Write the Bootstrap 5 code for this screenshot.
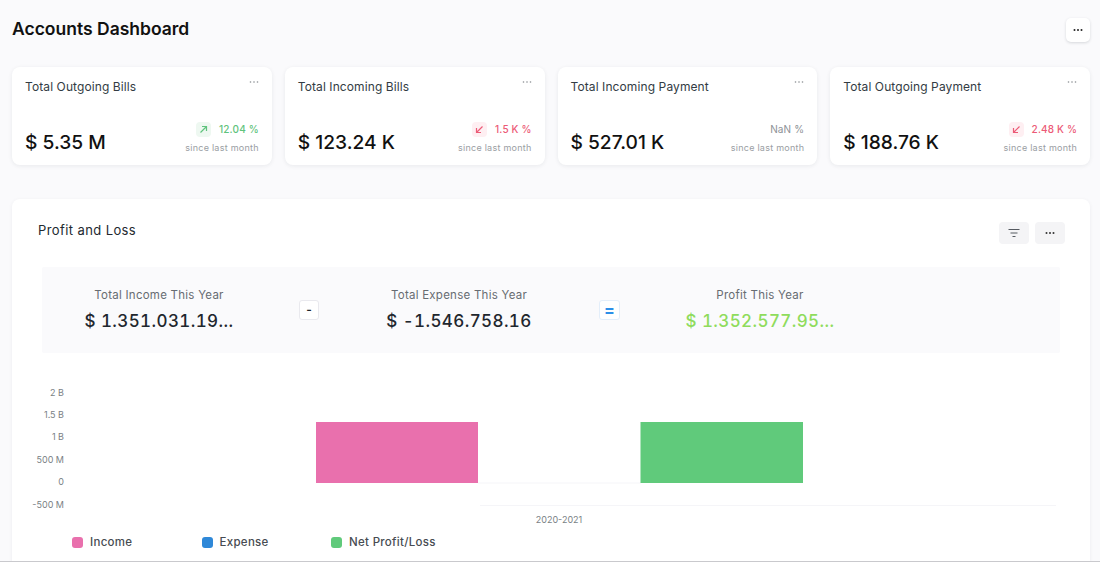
<!DOCTYPE html>
<html lang="en">
<head>
    <meta charset="UTF-8">
    <title>Accounts Dashboard</title>
    <link rel="stylesheet" href="https://cdn.jsdelivr.net/npm/bootstrap@5.3.0/dist/css/bootstrap.min.css">
    <style>
        html, body { height: 562px; overflow: hidden; }
        body { font-family: Inter, "Liberation Sans", sans-serif; background: #fafafc; color: #1f272e; }
        .page-shell { height: 562px; overflow: hidden; padding: 0 10px 0 12px; border-bottom: 1px solid #c9c9cd; }
        .page-head { height: 67px; padding-top: 18px; }
        .page-title { font-size: 17.5px; font-weight: 600; line-height: 22px; color: #111; margin: 0; }
        .head-btn { width: 24px; height: 24px; border-radius: 5px; background: #fff; box-shadow: 0 1px 3px rgba(25, 39, 52, .16); }
        .kpi-row { gap: 13px; }
        .kpi-card { flex: 1 1 0; height: 98px; border: 0; border-radius: 8px; background: #fff; box-shadow: 0 1px 4px rgba(25, 39, 52, .08); padding: 12px 13px 11px 13px; }
        .kpi-title { font-size: 12px; line-height: 15px; color: #333c44; letter-spacing: .1px; }
        .kpi-dots { margin: 1px 0 0 0; line-height: 0; }
        .kpi-value { font-size: 19.2px; font-weight: 500; line-height: 24px; color: #111; }
        .kpi-change { font-size: 10px; line-height: 16px; font-weight: 500; letter-spacing: .15px; }
        .kpi-since { font-size: 9px; line-height: 12px; color: #9a9ea3; margin-top: 5px; letter-spacing: .25px; }
        .trend-box { width: 15px; height: 15px; border-radius: 4px; margin-right: 8px; }
        .trend-up { background: #eef8f1; }
        .trend-down { background: #feeff2; }
        .c-up { color: #5fc37d; }
        .c-down { color: #ec5a76; }
        .c-flat { color: #8d9196; font-weight: 400; }
        .main-panel { margin-top: 34px; height: 400px; border: 0; border-radius: 8px 8px 0 0; background: #fff; box-shadow: 0 1px 4px rgba(25, 39, 52, .06); }
        .panel-head { height: 45px; padding: 23px 25px 0 26px; }
        .panel-title { font-size: 13px; font-weight: 400; line-height: 16px; color: #22292f; letter-spacing: .4px; }
        .tool-btn { width: 30px; height: 22px; border-radius: 4px; background: #f4f4f6; }
        .panel-head .gap-tools { gap: 6px; }
        .stat-band { margin: 23px 30px 0 30px; height: 86px; padding-left: 7px; gap: 30px; background: #fafafc; border-radius: 2px; }
        .stat-cell { width: 220px; text-align: center; }
        .stat-label { font-size: 11.5px; line-height: 14px; color: #676c72; letter-spacing: .25px; }
        .stat-value { font-size: 17px; font-weight: 500; line-height: 22px; margin-top: 8px; color: #1f272e; letter-spacing: .4px; font-variant-numeric: tabular-nums; }
        .stat-profit { color: #8fdc5c; }
        .op-box { width: 20px; height: 20px; border-radius: 3px; background: #fff; border: 1px solid #e9e9ee; font-size: 12px; font-weight: 600; line-height: 1; }
        .op-eq { width: 21px; color: #2d8fe8; border-color: #e3eefa; font-size: 16px; font-weight: 700; }
        .chart-box { display: block; margin-top: 29px; }
        .chart-box text { font-family: Inter, "Liberation Sans", sans-serif; font-size: 9px; fill: #7a7f85; }
        .legend-row { position: absolute; left: 60px; top: 336px; gap: 0; }
        .legend-item { width: 129.5px; font-size: 11.5px; font-weight: 500; line-height: 14px; color: #474c52; letter-spacing: .3px; }
        .legend-swatch { width: 11px; height: 11px; border-radius: 3px; margin-right: 7px; }
        .sw-income { background: #e970ad; }
        .sw-expense { background: #2f88d8; }
        .sw-net { background: #60ca7b; }
    </style>
</head>
<body>
    <div class="page-shell">
        <div class="page-head d-flex justify-content-between align-items-start">
            <h1 class="page-title mt-0 pt-0">Accounts Dashboard</h1>
            <div class="head-btn d-flex align-items-center justify-content-center">
                <svg width="12" height="4" viewBox="0 0 12 4"><circle cx="2.5" cy="2" r="1" fill="#222"/><circle cx="6" cy="2" r="1" fill="#222"/><circle cx="9.5" cy="2" r="1" fill="#222"/></svg>
            </div>
        </div>

        <div class="kpi-row d-flex">
            <div class="card kpi-card">
                <div class="d-flex justify-content-between align-items-start">
                    <div class="kpi-title">Total Outgoing Bills</div>
                    <div class="kpi-dots"><svg width="10" height="4" viewBox="0 0 10 4"><circle cx="1.5" cy="2" r=".8" fill="#8a8e93"/><circle cx="5" cy="2" r=".8" fill="#8a8e93"/><circle cx="8.5" cy="2" r=".8" fill="#8a8e93"/></svg></div>
                </div>
                <div class="d-flex justify-content-between align-items-end mt-auto">
                    <div class="kpi-value">$ 5.35 M</div>
                    <div class="text-end">
                        <div class="kpi-change c-up d-flex align-items-center justify-content-end">
                            <span class="trend-box trend-up d-flex align-items-center justify-content-center"><svg width="9" height="9" viewBox="0 0 9 9" fill="none" stroke="#5fc37d" stroke-width="1.2"><path d="M1.5 7.5 7.5 1.5M3 1.5h4.5V6"/></svg></span>12.04 %
                        </div>
                        <div class="kpi-since">since last month</div>
                    </div>
                </div>
            </div>
            <div class="card kpi-card">
                <div class="d-flex justify-content-between align-items-start">
                    <div class="kpi-title">Total Incoming Bills</div>
                    <div class="kpi-dots"><svg width="10" height="4" viewBox="0 0 10 4"><circle cx="1.5" cy="2" r=".8" fill="#8a8e93"/><circle cx="5" cy="2" r=".8" fill="#8a8e93"/><circle cx="8.5" cy="2" r=".8" fill="#8a8e93"/></svg></div>
                </div>
                <div class="d-flex justify-content-between align-items-end mt-auto">
                    <div class="kpi-value">$ 123.24 K</div>
                    <div class="text-end">
                        <div class="kpi-change c-down d-flex align-items-center justify-content-end">
                            <span class="trend-box trend-down d-flex align-items-center justify-content-center"><svg width="9" height="9" viewBox="0 0 9 9" fill="none" stroke="#ec5a76" stroke-width="1.2"><path d="M7.5 1.5 1.5 7.5M1.5 3v4.5H6"/></svg></span>1.5 K %
                        </div>
                        <div class="kpi-since">since last month</div>
                    </div>
                </div>
            </div>
            <div class="card kpi-card">
                <div class="d-flex justify-content-between align-items-start">
                    <div class="kpi-title">Total Incoming Payment</div>
                    <div class="kpi-dots"><svg width="10" height="4" viewBox="0 0 10 4"><circle cx="1.5" cy="2" r=".8" fill="#8a8e93"/><circle cx="5" cy="2" r=".8" fill="#8a8e93"/><circle cx="8.5" cy="2" r=".8" fill="#8a8e93"/></svg></div>
                </div>
                <div class="d-flex justify-content-between align-items-end mt-auto">
                    <div class="kpi-value">$ 527.01 K</div>
                    <div class="text-end">
                        <div class="kpi-change c-flat">NaN %</div>
                        <div class="kpi-since">since last month</div>
                    </div>
                </div>
            </div>
            <div class="card kpi-card">
                <div class="d-flex justify-content-between align-items-start">
                    <div class="kpi-title">Total Outgoing Payment</div>
                    <div class="kpi-dots"><svg width="10" height="4" viewBox="0 0 10 4"><circle cx="1.5" cy="2" r=".8" fill="#8a8e93"/><circle cx="5" cy="2" r=".8" fill="#8a8e93"/><circle cx="8.5" cy="2" r=".8" fill="#8a8e93"/></svg></div>
                </div>
                <div class="d-flex justify-content-between align-items-end mt-auto">
                    <div class="kpi-value">$ 188.76 K</div>
                    <div class="text-end">
                        <div class="kpi-change c-down d-flex align-items-center justify-content-end">
                            <span class="trend-box trend-down d-flex align-items-center justify-content-center"><svg width="9" height="9" viewBox="0 0 9 9" fill="none" stroke="#ec5a76" stroke-width="1.2"><path d="M7.5 1.5 1.5 7.5M1.5 3v4.5H6"/></svg></span>2.48 K %
                        </div>
                        <div class="kpi-since">since last month</div>
                    </div>
                </div>
            </div>
        </div>

        <div class="card main-panel position-relative">
            <div class="panel-head d-flex justify-content-between align-items-start">
                <div class="panel-title">Profit and Loss</div>
                <div class="gap-tools d-flex">
                    <div class="tool-btn d-flex align-items-center justify-content-center">
                        <svg width="12" height="10" viewBox="0 0 12 10" fill="none" stroke="#555a60" stroke-width="1.2"><path d="M.5 1.5h11M2.5 5h7M4.5 8.5h3"/></svg>
                    </div>
                    <div class="tool-btn d-flex align-items-center justify-content-center">
                        <svg width="12" height="4" viewBox="0 0 12 4"><circle cx="2.5" cy="2" r="1" fill="#333"/><circle cx="6" cy="2" r="1" fill="#333"/><circle cx="9.5" cy="2" r="1" fill="#333"/></svg>
                    </div>
                </div>
            </div>

            <div class="stat-band d-flex align-items-center">
                <div class="stat-cell">
                    <div class="stat-label">Total Income This Year</div>
                    <div class="stat-value">$ 1.351.031.19...</div>
                </div>
                <div class="op-box d-flex align-items-center justify-content-center">-</div>
                <div class="stat-cell">
                    <div class="stat-label">Total Expense This Year</div>
                    <div class="stat-value">$ -1.546.758.16</div>
                </div>
                <div class="op-box op-eq d-flex align-items-center justify-content-center">=</div>
                <div class="stat-cell">
                    <div class="stat-label">Profit This Year</div>
                    <div class="stat-value stat-profit">$ 1.352.577.95...</div>
                </div>
            </div>

            <svg class="chart-box" width="1078" height="146" viewBox="0 0 1078 146">
                <g text-anchor="end">
                    <text x="52" y="14">2 B</text>
                    <text x="52" y="36">1.5 B</text>
                    <text x="52" y="58">1 B</text>
                    <text x="52" y="81">500 M</text>
                    <text x="52" y="103">0</text>
                    <text x="52" y="126">-500 M</text>
                </g>
                <path d="M466 101h163" stroke="#f5f5f8" stroke-width="1"/>
                <path d="M468 123.5h576" stroke="#f5f5f8" stroke-width="1"/>
                <rect x="304" y="40" width="162" height="61" fill="#e970ad"/>
                <rect x="628.5" y="40" width="162.5" height="61" fill="#60ca7b"/>
                <text x="547" y="141" text-anchor="middle">2020-2021</text>
            </svg>

            <div class="legend-row d-flex">
                <div class="legend-item d-flex align-items-center"><span class="legend-swatch sw-income"></span>Income</div>
                <div class="legend-item d-flex align-items-center"><span class="legend-swatch sw-expense"></span>Expense</div>
                <div class="legend-item d-flex align-items-center"><span class="legend-swatch sw-net"></span>Net Profit/Loss</div>
            </div>
        </div>
    </div>
    <script src="https://cdn.jsdelivr.net/npm/bootstrap@5.3.0/dist/js/bootstrap.bundle.min.js"></script>
</body>
</html>
